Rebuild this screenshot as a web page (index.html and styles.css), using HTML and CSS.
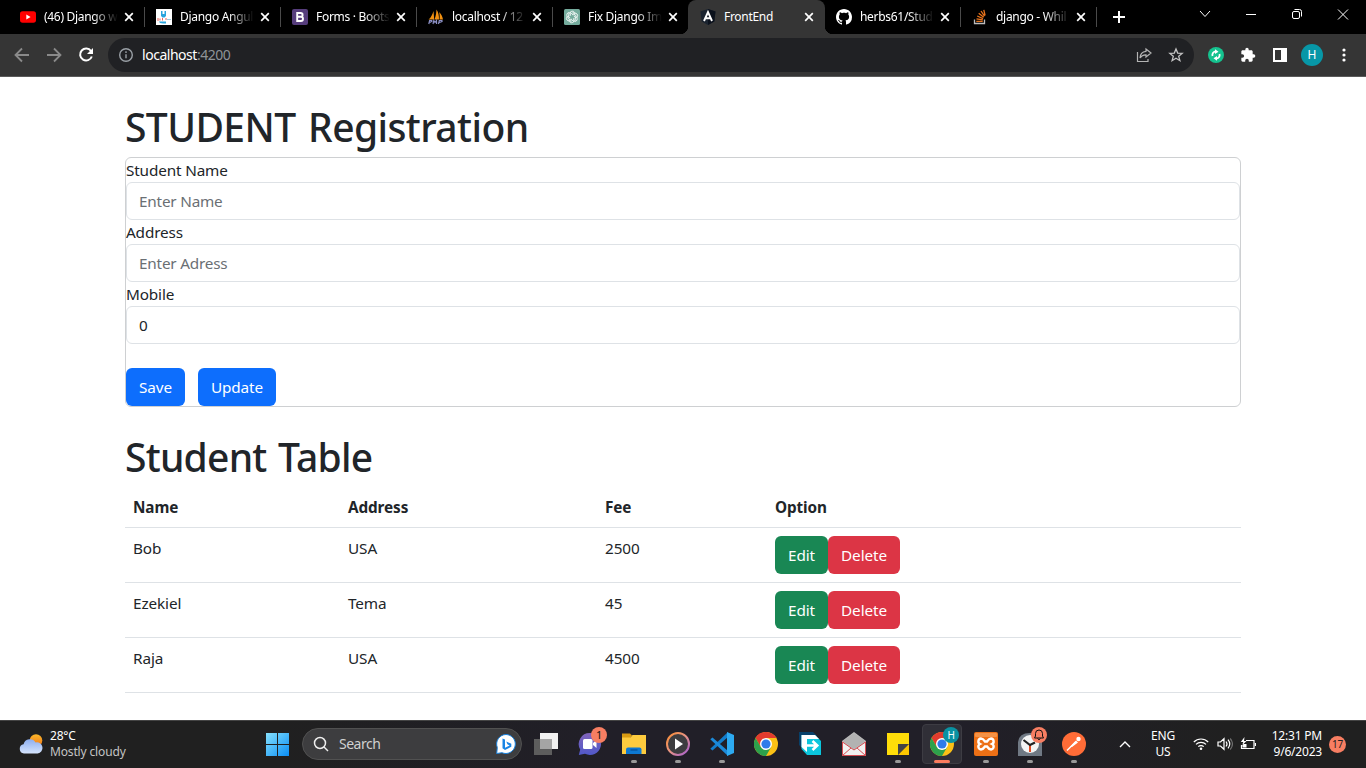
FILE: index.html
```
<!DOCTYPE html>
<html lang="en">
<head>
<meta charset="utf-8">
<title>FrontEnd</title>
<link rel="stylesheet" href="styles.css">
</head>
<body>
<svg class="defs" width="0" height="0">
  <symbol id="x" viewBox="0 0 10 10"><path d="M1.2 1.2 8.8 8.8M8.8 1.2 1.2 8.8" stroke="#fff" stroke-width="1.7"/></symbol>
  <symbol id="chrome" viewBox="0 0 24 24">
    <circle cx="12" cy="12" r="12" fill="#fbc116"/>
    <path d="M12 6H22.4A12 12 0 0 0 1.6 6L6.8 15Z" fill="#e33b2e"/>
    <path d="M1.6 6 6.8 15 12 18 17.2 15 12 24A12 12 0 0 1 1.6 6Z" fill="#2da14c"/>
    <circle cx="12" cy="12" r="6" fill="#fff"/><circle cx="12" cy="12" r="4.6" fill="#2f7bea"/>
  </symbol>
</svg>

<header class="browser">
  <div class="tabs">
    <div class="tab">
      <svg class="fav" viewBox="0 0 16 16"><rect y="2.3" width="16" height="11.4" rx="2.6" fill="#f00"/><path d="M6.3 5.5v5L10.6 8z" fill="#fff"/></svg>
      <span class="tab-title">(46) Django w</span><svg class="close"><use href="#x"/></svg>
    </div>
    <div class="tab">
      <svg class="fav" viewBox="0 0 16 16"><path d="M0 0h16v16H0z" fill="#fff"/><path d="M5 2h1.500v3h2V2H10v5L8.500 8.500h-2L5 7z" fill="#28a4dc"/><path d="M2 9v3M4 9.500v2M6.500 9v2.500M9 10h2" stroke="#e8645c" stroke-width="1" fill="none"/><path d="M11 10.500h4" stroke="#9ccbe0"/><path d="M3 12.500h7v2H7l-3-.6z" fill="#28a4dc"/></svg>
      <span class="tab-title">Django Angul</span><svg class="close"><use href="#x"/></svg>
    </div>
    <div class="tab">
      <svg class="fav" viewBox="0 0 16 16"><rect width="16" height="16" rx="2" fill="#563d7c"/><path d="M5.200 4h3.400a2 1.900 0 0 1 0 3.800H5.200zM5.200 7.800h3.700a2.100 2.100 0 0 1 0 4.200H5.200z" fill="none" stroke="#fff" stroke-width="1.900"/></svg>
      <span class="tab-title">Forms · Boots</span><svg class="close"><use href="#x"/></svg>
    </div>
    <div class="tab">
      <svg class="fav" viewBox="0 0 16 16"><path d="M.5 10.500C3 9 4.500 5 5.500 2l.7 8.500zM6.500 10.500C8 7 8.300 3 8.500.5 10.500 3 11 7 11 10.500zM11.500 10.500c.4-2 .2-5-.3-7.500 2 2 3.400 5 3.800 7.500z" fill="#f29111"/><path d="M.8 15l.8-3.500h2q1.400 1-1.800 1.800M5 15l.8-3.500L7 13.500l1.500-2L8.600 15M10.500 15l.8-3.500h2.500q1.500 1-2.500 1.800" stroke="#8b8fc4" stroke-width="1.200" fill="none"/></svg>
      <span class="tab-title">localhost / 12</span><svg class="close"><use href="#x"/></svg>
    </div>
    <div class="tab no-line">
      <svg class="fav" viewBox="0 0 16 16"><rect width="16" height="16" rx="1.500" fill="#75ac9d"/><g fill="none" stroke="#fff" stroke-width=".8"><path id="petal" d="M6.200 7V4.300a2.200 2.200 0 0 1 4.200-.9M6.200 5.200 8.600 3.900q1.500-.7 2.800.2"/><use href="#petal" transform="rotate(60 8 8)"/><use href="#petal" transform="rotate(120 8 8)"/><use href="#petal" transform="rotate(180 8 8)"/><use href="#petal" transform="rotate(240 8 8)"/><use href="#petal" transform="rotate(300 8 8)"/></g></svg>
      <span class="tab-title">Fix Django Im</span><svg class="close"><use href="#x"/></svg>
    </div>
    <div class="tab active no-line">
      <svg class="fav" viewBox="0 0 16 16"><path d="M8 0l7.500 2.600-1.200 9.800L8 16l-6.300-3.600L.5 2.600z" fill="#1b2430"/><path d="M8 0l7.500 2.600-1.200 9.800L8 16z" fill="#0b111c"/><path d="M4 12 8 3l4 9M5.500 9.300h5" fill="none" stroke="#fff" stroke-width="1.900"/></svg>
      <span class="tab-title solid">FrontEnd</span><svg class="close"><use href="#x"/></svg>
    </div>
    <div class="tab">
      <svg class="fav" viewBox="0 0 16 16"><path fill="#fff" d="M8 0C3.580 0 0 3.580 0 8c0 3.540 2.290 6.530 5.470 7.590.4.070.55-.17.55-.38 0-.19-.01-.82-.01-1.490-2.010.37-2.530-.49-2.690-.94-.09-.23-.48-.94-.82-1.130-.28-.15-.68-.52-.01-.53.63-.01 1.080.58 1.230.82.72 1.210 1.870.87 2.330.66.070-.52.28-.87.51-1.070-1.780-.2-3.640-.89-3.640-3.950 0-.87.31-1.590.82-2.150-.08-.2-.36-1.020.08-2.120 0 0 .67-.21 2.200.82.64-.18 1.320-.27 2-.27s1.360.09 2 .27c1.530-1.040 2.200-.82 2.200-.82.44 1.100.16 1.920.08 2.120.51.56.82 1.270.82 2.150 0 3.070-1.870 3.750-3.650 3.950.29.25.54.73.54 1.480 0 1.070-.01 1.930-.01 2.200 0 .21.15.46.55.38A8.010 8.010 0 0 0 16 8c0-4.420-3.580-8-8-8z"/></svg>
      <span class="tab-title">herbs61/Stud</span><svg class="close"><use href="#x"/></svg>
    </div>
    <div class="tab">
      <svg class="fav" viewBox="0 0 16 16"><path d="M2.500 10.500v4h10v-4" fill="none" stroke="#bcbbbb" stroke-width="1.300"/><path d="M4.300 12.400h6.400M4.500 9.800l6.300 1.100M5.200 7l5.900 2.600M6.700 4.300l5 4M9 2l3.500 5.200M11.800.8l1.300 5.700" stroke="#e8731c" stroke-width="1.300"/></svg>
      <span class="tab-title">django - Whil</span><svg class="close"><use href="#x"/></svg>
    </div>
    <svg class="plus" viewBox="0 0 12 12"><path d="M6 0v12M0 6h12" stroke="#fff" stroke-width="2"/></svg>
    <div class="window-buttons">
      <svg viewBox="0 0 46 28"><path d="M18 11l5 5.500L28 11" /></svg>
      <svg viewBox="0 0 46 28"><path d="M18 14.500h10"/></svg>
      <svg viewBox="0 0 46 28"><rect x="18.500" y="11.500" width="7" height="7" rx="1.500"/><path d="M20.500 9.500h5q2 0 2 2v5"/></svg>
      <svg viewBox="0 0 46 28"><path d="M18 9.500l10 10M28 9.500l-10 10"/></svg>
    </div>
  </div>
  <div class="toolbar">
    <svg class="nav" viewBox="0 0 32 32"><path d="M23 16H9.500M16 9.500 9.500 16l6.500 6.500" stroke="#8a8a8a"/></svg>
    <svg class="nav" viewBox="0 0 32 32"><path d="M9 16h13.500M16 9.500l6.500 6.500-6.500 6.500" stroke="#8a8a8a"/></svg>
    <svg class="nav" viewBox="0 0 32 32"><path d="M21 12a6 6 0 1 0 .8 5.500" stroke="#fff" stroke-width="2"/><path d="M23 9v6h-6z" fill="#fff"/></svg>
    <div class="address">
      <svg class="info" viewBox="0 0 16 16"><circle cx="8" cy="8" r="6.300"/><path d="M8 7.200v4M8 4.300v1.600"/></svg>
      <span class="url"><b>localhost</b>:4200</span>
      <svg class="share" viewBox="0 0 16 16"><path d="M1.500 5v9.500H12V12M10 2l5 4-5 4V7.800Q6 7.600 4 11q.2-6 6-6.700z"/></svg>
      <svg class="star" viewBox="0 0 16 16"><path d="M8 1.900l1.700 4.200 4.500.3-3.500 2.900 1.200 4.400L8 11.300l-3.900 2.400 1.200-4.400-3.500-2.900 4.500-.3z"/></svg>
    </div>
    <svg class="ext green" viewBox="0 0 16 16"><circle cx="8" cy="8" r="8" fill="#15c38f"/><path d="M8 4.300A3.700 3.700 0 0 0 4.500 9M8 11.700A3.700 3.700 0 0 0 11.500 7" fill="none" stroke="#fff" stroke-width="1.800"/><path d="M7 2.300 10.500 4.800 7 7zM9 9v4.700L5.500 11.300z" fill="#fff"/></svg>
    <svg class="ext" viewBox="0 0 24 24"><path fill="#fff" d="M20.500 11H19V7c0-1.100-.9-2-2-2h-4V3.500a2.500 2.500 0 0 0-5 0V5H4c-1.100 0-2 .9-2 2v3.800h1.500a2.700 2.700 0 0 1 0 5.400H2V20c0 1.100.9 2 2 2h3.800v-1.500a2.700 2.700 0 0 1 5.400 0V22H17c1.100 0 2-.9 2-2v-4h1.500a2.500 2.500 0 0 0 0-5z"/></svg>
    <svg class="ext" viewBox="0 0 16 16"><path fill="#fff" fill-rule="evenodd" d="M1 1h14v14H1zM3 3v10h6V3z"/></svg>
    <span class="avatar">H</span>
    <svg class="dots" viewBox="0 0 4 16"><circle cx="2" cy="3" r="1.600"/><circle cx="2" cy="8" r="1.600"/><circle cx="2" cy="13" r="1.600"/></svg>
  </div>
</header>

<main class="container">
  <h1 class="h-reg">STUDENT Registration</h1>
  <form class="card">
    <label>Student Name</label>
    <input class="field" placeholder="Enter Name">
    <label>Address</label>
    <input class="field" placeholder="Enter Adress">
    <label>Mobile</label>
    <input class="field" value="0">
    <div class="actions">
      <button type="button" class="btn primary save">Save</button>
      <button type="button" class="btn primary update">Update</button>
    </div>
  </form>
  <h1 class="h-table">Student Table</h1>
  <table class="table">
    <thead><tr><th class="c1">Name</th><th class="c2">Address</th><th class="c3">Fee</th><th>Option</th></tr></thead>
    <tbody>
      <tr><td>Bob</td><td>USA</td><td>2500</td><td><div class="row-actions"><button class="btn edit">Edit</button><button class="btn delete">Delete</button></div></td></tr>
      <tr><td>Ezekiel</td><td>Tema</td><td>45</td><td><div class="row-actions"><button class="btn edit">Edit</button><button class="btn delete">Delete</button></div></td></tr>
      <tr><td>Raja</td><td>USA</td><td>4500</td><td><div class="row-actions"><button class="btn edit">Edit</button><button class="btn delete">Delete</button></div></td></tr>
    </tbody>
  </table>
</main>

<footer class="taskbar">
  <div class="weather">
    <svg viewBox="0 0 26 24" class="weather-icon"><defs><linearGradient id="cl" x2="0" y2="1"><stop stop-color="#8caef0"/><stop offset="1" stop-color="#d5e4fd"/></linearGradient><linearGradient id="sun" x2="0" y2="1"><stop stop-color="#fbb829"/><stop offset="1" stop-color="#f0741a"/></linearGradient></defs><circle cx="18" cy="8.500" r="6.300" fill="url(#sun)"/><path d="M6 21.500a4.700 4.700 0 0 1-.4-9.300 6.500 6.500 0 0 1 12-1.700 5.600 5.600 0 1 1 2 11z" fill="url(#cl)"/></svg>
    <div class="weather-text"><span class="temp">28°C</span><span class="sky">Mostly cloudy</span></div>
  </div>
  <div class="app"><svg viewBox="0 0 24 24"><defs><linearGradient id="win" gradientUnits="userSpaceOnUse" x1="0" y1="0" x2="24" y2="24"><stop stop-color="#8be4fd"/><stop offset="1" stop-color="#0a8ef5"/></linearGradient></defs><path d="M1 1h11v11H1zM13 1h11v11H13zM1 13h11v11H1zM13 13h11v11H13z" fill="url(#win)"/></svg></div>
  <div class="search">
    <svg viewBox="0 0 16 16" class="lens"><circle cx="7" cy="7" r="5.500"/><path d="M11 11l4 4"/></svg>
    <span>Search</span>
    <svg viewBox="0 0 20 20" class="bing"><path d="M10 .5A9.500 9.500 0 1 1 6 18.700L.7 19.500l.6-6A9.500 9.500 0 0 1 10 .5z" fill="#fff" stroke="#1681df"/><path d="M6.500 4.500 9 5.400v8.300l4.600-2.300-2.200-1.100L10.300 7.500l5 2.300v2.900L9 16l-2.500-1.700z" fill="#1985e5"/></svg>
  </div>
  <div class="app"><svg viewBox="0 0 24 24"><path d="M6 1h18v16H6z" fill="#f1f1f1"/><path d="M0 7h18v16H0z" fill="#5d5d5d"/><path d="M6 7h12v10H6z" fill="#a5a5a5"/></svg></div>
  <div class="app"><svg viewBox="0 0 24 24"><defs><linearGradient id="chat" x2="0" y2="1"><stop stop-color="#8163ba"/><stop offset="1" stop-color="#5058c9"/></linearGradient></defs><path d="M12 1a11 11 0 1 1-5 20.800L.8 23l1.400-5.500A11 11 0 0 1 12 1z" fill="url(#chat)"/><rect x="5" y="7" width="9.500" height="10" rx="1.500" fill="#fff"/><path d="M15 11l3.500-3v8L15 13z" fill="#fff"/></svg><i class="badge">1</i></div>
  <div class="app run"><svg viewBox="0 0 24 24"><path d="M0 1.500h8l2 2-2 3H0z" fill="#d99b12"/><path d="M0 5.500h8.500l2-2.500H24v19H0z" fill="#fdcb3e"/><path d="M4 22v-4.500q0-2 2-2h11.500q2 0 2 2V22z" fill="#0d78d2"/><path d="M8.500 18h7" stroke="#064f98" stroke-width="1.200"/></svg></div>
  <div class="app run"><svg viewBox="0 0 24 24"><defs><linearGradient id="mp" x2="1" y2="1"><stop stop-color="#fa8d30"/><stop offset=".5" stop-color="#e69387"/><stop offset="1" stop-color="#a15bd6"/></linearGradient></defs><circle cx="12" cy="12" r="11" fill="#3c3c3f" stroke="url(#mp)" stroke-width="2"/><path d="M9 6.500v11l8-5.500z" fill="#fff"/></svg></div>
  <div class="app run"><svg viewBox="0 0 24 24"><path d="M18 5 2.500 18.500.3 16.700 18 0z" fill="#137dcb"/><path d="M18 19 2.500 5.500.3 7.300 18 24z" fill="#1c8ada"/><path d="M17 0l7 3v18l-7 3z" fill="#2daaf2"/></svg></div>
  <div class="app"><svg><use href="#chrome"/></svg></div>
  <div class="app"><svg viewBox="0 0 24 24"><path d="M1 0h14l4 4v13H5l-4-4z" fill="#07406a"/><path d="M3.500 3H17l6 6v14H9l-5.500-6z" fill="#0bc6dd"/><path d="M3.500 3H17l4 4H9v13l-5.500-5z" fill="#fff"/><path d="M7 13.500h11M14.500 9l4.800 4.500-4.800 4.500" fill="none" stroke="#fff" stroke-width="2.500"/></svg></div>
  <div class="app"><svg viewBox="0 0 24 24"><path d="M0 9 12 0l12 9v15H0z" fill="#bcbcbc"/><path d="M.5 10v13.500h23V10L12 18z" fill="#f1f1f1" stroke="#d44b52"/><path d="M1 9 12 1l11 8-11 8z" fill="#b2b2b2"/><path d="M.5 23.500 9 16M23.500 23.500 15 16" stroke="#d44b52" fill="none"/></svg></div>
  <div class="app run"><svg viewBox="0 0 24 24"><path d="M1 1h22v11H12v11H1z" fill="#ffdd09"/><path d="M12 12h11L12 23z" fill="#444"/><path d="M23 12v11H12z" fill="#fbc600"/></svg></div>
  <div class="app current"><svg><use href="#chrome"/></svg><i class="badge teal">H</i></div>
  <div class="app run"><svg viewBox="0 0 24 24"><rect width="24" height="24" rx="2" fill="#ed7016"/><rect x="1" y="1" width="22" height="4" rx="1" fill="#f49246"/><path d="M11 9.500Q9 6.500 7 6.500A2.900 2.900 0 0 0 6 12a2.900 2.900 0 0 0 1 5.500q2 0 4-3h2q2 3 4 3a2.900 2.900 0 0 0 1-5.500 2.900 2.900 0 0 0-1-5.500q-2 0-4 3z" fill="none" stroke="#fff" stroke-width="2.400"/></svg></div>
  <div class="app run"><svg viewBox="0 0 24 24"><path d="M0 24V10Q1 1 12 1t12 9v14z" fill="#707984"/><circle cx="12" cy="12" r="9" fill="#f4f4f4"/><path d="M12 13v7" stroke="#e44b24" stroke-width="2"/><path d="M5.500 8l6.500 5 5-2.500" fill="none" stroke="#222" stroke-width="2.200"/></svg><i class="badge bell"><svg viewBox="0 0 12 12"><path d="M1.500 9h9L9.500 7V4.500a3.500 3.500 0 0 0-7 0V7zM4.500 9.500q1.500 2.500 3 0" fill="none" stroke="#111"/></svg></i></div>
  <div class="app run"><svg viewBox="0 0 24 24"><circle cx="12" cy="12" r="12" fill="#ff6c37"/><path d="M5 18.500 14 9.500" stroke="#fff" stroke-width="1.500"/><path d="M8 15l6-6.500 2 2L10 15z" fill="#fff"/><circle cx="16.500" cy="7" r="2.200" fill="#fff"/></svg></div>
  <svg class="up" viewBox="0 0 12 8"><path d="M1 7l5-5 5 5"/></svg>
  <div class="lang"><span>ENG</span><span>US</span></div>
  <div class="status">
    <svg viewBox="0 0 16 16"><path d="M.8 6a10.200 10.200 0 0 1 14.400 0M3 8.400a7 7 0 0 1 10 0M5.300 10.700a3.800 3.800 0 0 1 5.400 0"/><circle cx="8" cy="12.700" r="1.300" fill="#fff" stroke="none"/></svg>
    <svg viewBox="0 0 16 16"><path d="M1 6h2.500L7 2.700v10.600L3.500 10H1zM9 5.500q2 2.500 0 5M11 3.700q3.500 4.300 0 8.600"/><path d="M13.200 2.500q4.500 5.500 0 11" opacity=".35"/></svg>
    <svg viewBox="0 0 16 16"><path d="M6 4.500h8v8H1.500V9M15.500 7v3"/><path d="M2.500 8h4v3.500h-4zM4.500 1 .8 6h2.500L2 9.500 6.500 5H4z" fill="#fff" stroke="none"/></svg>
  </div>
  <div class="clock"><span>12:31 PM</span><span>9/6/2023</span></div>
  <i class="notice">17</i>
</footer>
</body>
</html>
```
FILE: styles.css
```
* { box-sizing: border-box; }
body { margin: 0; width: 1366px; height: 768px; overflow: hidden; display: flex; flex-direction: column; background: #fff; color: #212529; font: 400 15.3px/24px "Noto Sans", "Open Sans", sans-serif; }
svg { display: block; flex: none; }
.defs { position: absolute; }
i { font-style: normal; }

.browser { flex: none; height: 77px; }
.tabs { display: flex; align-items: center; height: 34px; padding-left: 8px; background: #000; }
.tab { position: relative; width: 136px; height: 34px; flex: none; display: flex; align-items: center; padding: 0 10px 0 12px; color: #fff; font-size: 12px; }
.tab::after { content: ""; position: absolute; right: -1px; top: 7px; width: 1px; height: 20px; background: #4a4a4a; }
.tab.no-line::after { display: none; }
.fav { width: 16px; height: 16px; margin-right: 8px; }
.tab-title { width: 74px; flex: none; white-space: nowrap; letter-spacing: -.3px; -webkit-mask-image: linear-gradient(90deg, #000 65%, transparent 100%); mask-image: linear-gradient(90deg, #000 65%, transparent 100%); }
.tab-title.solid { -webkit-mask-image: none; mask-image: none; }
.close { width: 10px; height: 10px; margin-left: 6px; }
.active { height: 34px; border-radius: 8px 8px 0 0; background: #353535; width: 137px; margin-right: -1px; }
.active::before { content: ""; position: absolute; left: -8px; right: -8px; bottom: 0; height: 8px; background: radial-gradient(circle at 0 0, transparent 8px, #353535 8.500px) left / 8px 8px no-repeat, radial-gradient(circle at 100% 0, transparent 8px, #353535 8.500px) right / 8px 8px no-repeat; }
.plus { width: 12px; height: 12px; margin-left: 17px; }
.window-buttons { display: flex; margin-left: auto; align-self: flex-start; }
.window-buttons svg { width: 46px; height: 28px; fill: none; stroke: #fff; }
.toolbar { display: flex; align-items: center; height: 43px; padding: 0 0 1px 6px; background: #353535; border-bottom: 1px solid #5a5a5a; }
.nav { width: 32px; height: 32px; fill: none; stroke-width: 1.8; }
.address { display: flex; align-items: center; width: 1086px; height: 34px; margin-left: 6px; padding: 0 10px; border-radius: 17px; background: #202124; }
.info { width: 16px; height: 16px; fill: none; stroke: #9aa0a6; stroke-width: 1.4; }
.url { margin-left: 8px; font-size: 14px; letter-spacing: -.47px; color: #8f9398; }
.url b { font-weight: 400; color: #fff; }
.share { width: 16px; height: 16px; margin-left: auto; fill: none; stroke: #b4b4b4; stroke-width: 1.2; }
.star { width: 16px; height: 16px; margin-left: 16px; fill: none; stroke: #c4c4c4; stroke-width: 1.3; }
.ext { width: 16px; height: 16px; margin-left: 16px; }
.ext.green { margin-left: 14px; }
.avatar { width: 22px; height: 22px; margin-left: 13px; border-radius: 50%; background: #0797a7; color: #fff; font-size: 12px; line-height: 22px; text-align: center; }
.dots { width: 4px; height: 16px; margin-left: 19px; fill: #fff; }

.container { flex: none; width: 1140px; height: 643px; margin: 0 auto; padding: 24px 12px 0; }
h1 { height: 48px; margin: 0 0 8px; padding-top: 2px; font-size: 39px; line-height: 48px; font-weight: 500; white-space: nowrap; }
.h-reg { letter-spacing: -.58px; word-spacing: 3px; }
.h-table { margin-top: 24px; letter-spacing: -.75px; word-spacing: 2px; }
.card { height: 250px; border: 1px solid #ced0d2; border-radius: 6px; display: flex; flex-direction: column; }
label { height: 24px; line-height: 25px; letter-spacing: -.15px; }
.field { width: 100%; height: 38px; padding: 6px 12px; border: 1px solid #dee2e6; border-radius: 6px; background: #fff; color: #212529; font: inherit; letter-spacing: -.2px; }
.field::placeholder { color: #6a6f74; opacity: 1; }
.actions { display: flex; gap: 13px; margin-top: 24px; }
.btn { height: 38px; padding: 0; border: 0; border-radius: 6px; color: #fff; font: inherit; letter-spacing: -.1px; text-align: center; }
.primary { background: #0d6efd; }
.save { width: 59px; }
.update { width: 78px; }
.table { width: 1116px; table-layout: fixed; border-collapse: separate; border-spacing: 0; letter-spacing: -.1px; }
th, td { padding: 8px; border-bottom: 1px solid #dee2e6; text-align: left; vertical-align: top; }
.c1 { width: 215px; }
.c2 { width: 257px; }
.c3 { width: 170px; }
.row-actions { display: flex; }
.edit { width: 53px; background: #198754; }
.delete { width: 72px; background: #dc3545; }

.taskbar { flex: none; display: flex; align-items: center; height: 48px; background: linear-gradient(90deg, #202020, #202020 20%, #211f28 45%, #211f28 70%, #202020 90%); box-shadow: inset 0 1px #444; color: #fff; font-size: 12px; line-height: 16px; letter-spacing: -.2px; }
.weather { display: flex; align-items: center; width: 255px; padding-left: 18px; }
.weather-icon { width: 26px; height: 24px; }
.weather-text { display: flex; flex-direction: column; margin-left: 6px; }
.sky { color: #c4c4c4; letter-spacing: -.15px; }
.app { position: relative; width: 44px; height: 40px; flex: none; display: flex; align-items: center; justify-content: center; }
.app > svg { width: 24px; height: 24px; }
.run::after, .current::after { content: ""; position: absolute; bottom: 1px; left: 19px; width: 6px; height: 3px; border-radius: 2px; background: #999; }
.current::before { content: ""; position: absolute; inset: 0 2px; border: 1px solid #3d3c43; border-radius: 4px; background: #302f37; }
.current > svg { position: relative; }
.current::after { left: 14px; width: 16px; background: #fb7c5f; }
.badge { position: absolute; left: 23px; top: 3px; width: 16px; height: 16px; border-radius: 50%; background: #f77e62; color: #111; text-align: center; font-size: 11px; line-height: 16px; }
.badge.teal { background: #0a92a2; color: #fff; font-size: 10px; }
.bell svg { width: 12px; height: 12px; margin: 2px; }
.search { display: flex; align-items: center; width: 220px; height: 32px; margin: 0 2px 0 3px; padding: 0 5px 0 10px; border: 1px solid #515151; border-radius: 16px; background: #3d3d3f; font-size: 14px; color: #d0d0d0; letter-spacing: -.5px; }
.search span { margin-left: 10px; }
.lens { width: 16px; height: 16px; fill: none; stroke: #eee; stroke-width: 1.5; }
.bing { width: 20px; height: 20px; margin-left: auto; }
.up { width: 12px; height: 8px; margin-left: 23px; fill: none; stroke: #fff; stroke-width: 1.4; }
.lang { width: 40px; margin-left: 12px; display: flex; flex-direction: column; text-align: center; }
.status { display: flex; gap: 7.500px; margin-left: 10px; }
.status svg { width: 16px; height: 16px; fill: none; stroke: #fff; stroke-width: 1.2; }
.clock { display: flex; flex-direction: column; width: 60px; margin-left: auto; text-align: right; white-space: nowrap; }
.notice { width: 17px; height: 17px; margin: 0 20px 0 7px; border-radius: 50%; background: #f77e62; color: #222; font-size: 10px; line-height: 17px; text-align: center; }
```
